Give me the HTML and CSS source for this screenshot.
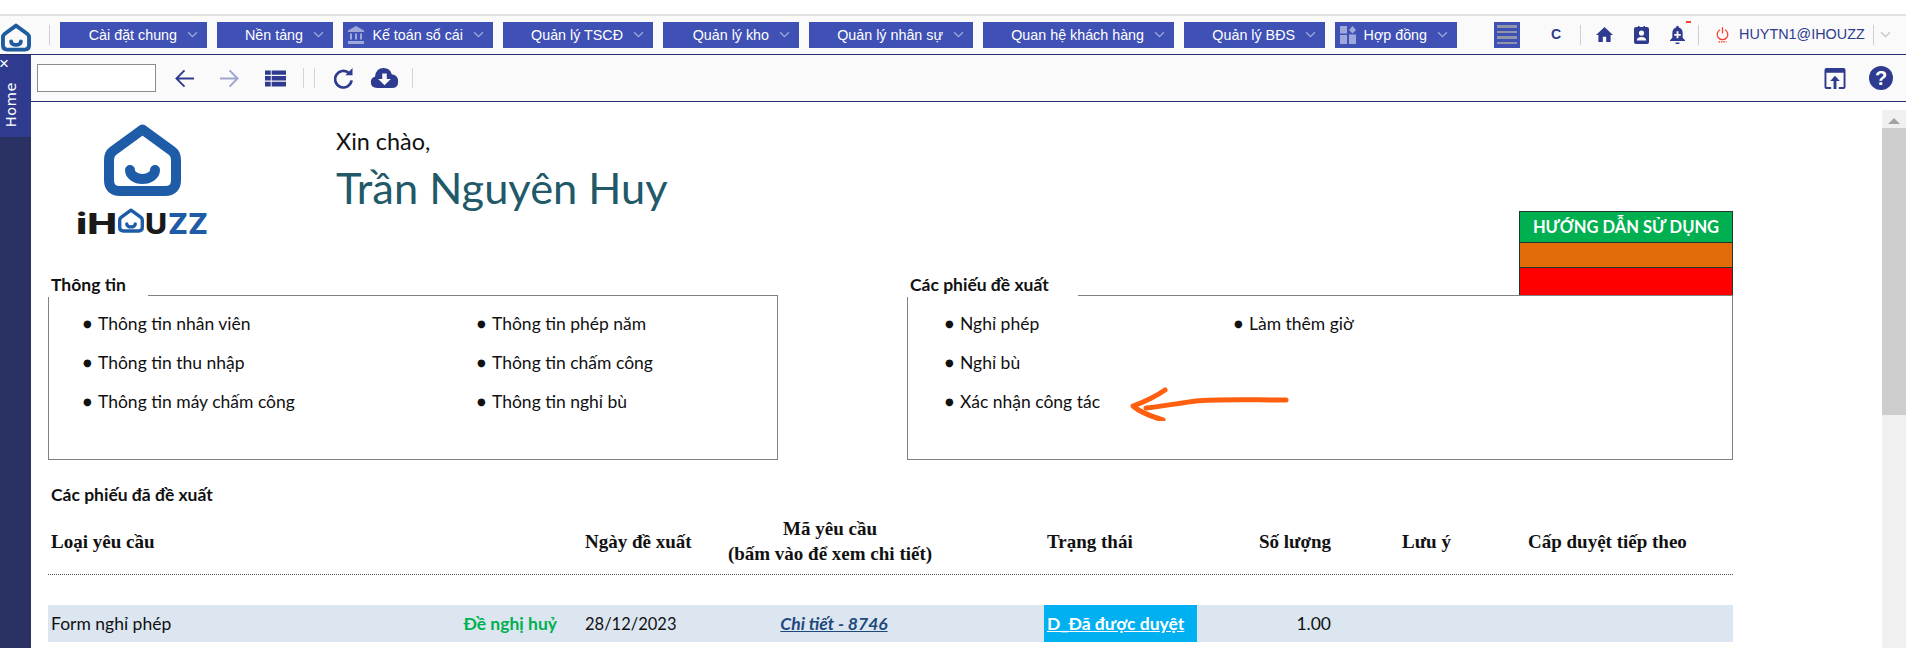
FILE: index.html
```html
<!DOCTYPE html>
<html lang="vi">
<head>
<meta charset="utf-8">
<title>iHOUZZ</title>
<link rel="stylesheet" href="styles.css">
</head>
<body>
<svg class="defs" width="0" height="0">
  <symbol id="house" viewBox="0 0 77 72">
    <path d="M38.500 5.500 L68 27 Q72 30 72 36 V56 Q72 67 61 67 H16 Q5 67 5 56 V36 Q5 30 9 27 Z" fill="none" stroke="currentColor" stroke-width="10" stroke-linejoin="round"/>
    <path d="M26 46 A12.500 9 0 0 0 51 46" fill="none" stroke="currentColor" stroke-width="10" stroke-linecap="round"/>
  </symbol>
</svg>
<div class="strip"></div>
<header class="nav">
  <svg class="nav-logo"><use href="#house"/></svg>
  <span class="nav-sep"></span>
  <div class="menus">
    <a class="menu m1">Cài đặt chung<svg class="chev" viewBox="0 0 12 8"><path d="M1 1.5l5 5 5-5"/></svg></a>
    <a class="menu m2">Nền tảng<svg class="chev" viewBox="0 0 12 8"><path d="M1 1.5l5 5 5-5"/></svg></a>
    <a class="menu m3"><svg class="menu-ico" viewBox="0 0 16 18"><path d="M8 0L16 4.500V6H0V4.500ZM2 7.500H4V13.500H2ZM7 7.500H9V13.500H7ZM12 7.500H14V13.500H12ZM0 15H16V18H0Z"/></svg>Kế toán sổ cái<svg class="chev" viewBox="0 0 12 8"><path d="M1 1.5l5 5 5-5"/></svg></a>
    <a class="menu m4">Quản lý TSCĐ<svg class="chev" viewBox="0 0 12 8"><path d="M1 1.5l5 5 5-5"/></svg></a>
    <a class="menu m5">Quản lý kho<svg class="chev" viewBox="0 0 12 8"><path d="M1 1.5l5 5 5-5"/></svg></a>
    <a class="menu m6">Quản lý nhân sự<svg class="chev" viewBox="0 0 12 8"><path d="M1 1.5l5 5 5-5"/></svg></a>
    <a class="menu m7">Quan hệ khách hàng<svg class="chev" viewBox="0 0 12 8"><path d="M1 1.5l5 5 5-5"/></svg></a>
    <a class="menu m8">Quản lý BĐS<svg class="chev" viewBox="0 0 12 8"><path d="M1 1.5l5 5 5-5"/></svg></a>
    <a class="menu m9"><svg class="menu-ico" viewBox="0 0 16 18"><path d="M0 0H7V7.500H0ZM12.500 0L16 4 12.500 7.500 9 4ZM9 8.500H16V18H9ZM0 9H7V18H0Z"/></svg>Hợp đồng<svg class="chev" viewBox="0 0 12 8"><path d="M1 1.5l5 5 5-5"/></svg></a>
  </div>
  <a class="burger"><span></span><span></span><span></span><span></span></a>
  <span class="nav-c">C</span>
  <span class="nav-sep sep-a"></span>
  <svg class="nav-ico home" viewBox="0 0 18 16"><path d="M9 0L18 8.500H15.500V16H10.800V10.500H7.200V16H2.500V8.500H0Z"/></svg>
  <svg class="nav-ico badge" viewBox="0 0 15 18"><path fill-rule="evenodd" d="M2 1H4V0H5.500V1H9.500V0H11V1H13Q15 1 15 3V16Q15 18 13 18H2Q0 18 0 16V3Q0 1 2 1ZM7.500 4.500A2.600 2.600 0 1 0 7.500 9.700A2.600 2.600 0 1 0 7.500 4.500ZM2.800 14.500H12.200Q12.200 11 7.500 11Q2.800 11 2.800 14.500Z"/></svg>
  <span class="bell-wrap">
    <svg class="nav-ico bell" viewBox="0 0 16 20"><path fill-rule="evenodd" d="M8 0Q9.500 0 9.500 2Q13.500 3 13.500 8V13L16 15.500V16.500H0V15.500L2.500 13V8Q2.500 3 6.500 2Q6.500 0 8 0ZM7 6V9H4.500V10.800H7V13.500H9V10.800H11.500V9H9V6ZM6 18H10V19.500H6Z"/></svg>
    <span class="bell-dot"></span>
  </span>
  <span class="nav-sep sep-b"></span>
  <svg class="power" viewBox="0 0 16 20"><path d="M5 3.500A6.500 6.500 0 1 0 11 3.500M8 0.500V8" fill="none" stroke="#f44336" stroke-width="1.600"/><path d="M3 18.500H13" stroke="#f44336" stroke-width="1.600" stroke-dasharray="2 1"/></svg>
  <span class="user">HUYTN1@IHOUZZ</span>
  <span class="nav-sep sep-c"></span>
  <svg class="chev user-chev" viewBox="0 0 12 8"><path d="M1 1.500l5 5 5-5"/></svg>
</header>
<div class="main">
  <aside class="side">
    <div class="side-tab">
      <span class="side-x">×</span>
      <span class="side-home">Home</span>
    </div>
  </aside>
  <div class="work">
    <div class="toolbar">
      <input class="search" type="text" aria-label="search">
      <svg class="tool back" viewBox="0 0 20 20"><path d="M20 10H2M10 1.500L1.500 10 10 18.500" fill="none" stroke="currentColor" stroke-width="2"/></svg>
      <svg class="tool fwd" viewBox="0 0 20 20"><path d="M0 10H18M10 1.500L18.500 10 10 18.500" fill="none" stroke="currentColor" stroke-width="2"/></svg>
      <svg class="tool list" viewBox="0 0 22 17"><path d="M0 0H6V4.500H0ZM7 0H22V4.500H7ZM0 6H6V10.500H0ZM7 6H22V10.500H7ZM0 12H6V17H0ZM7 12H22V17H7Z"/></svg>
      <span class="tool-sep s1"></span>
      <span class="tool-sep s2"></span>
      <svg class="tool refresh" viewBox="0 0 20 22"><path d="M16 5.500A8.700 8.700 0 1 0 18.500 13" fill="none" stroke="currentColor" stroke-width="2.800"/><path d="M12 7.500H19.500V0Z"/></svg>
      <svg class="tool cloud" viewBox="0 0 30 22"><path fill-rule="evenodd" d="M7 22Q0 22 0 15.500Q0 10.500 4.500 9.500Q5.500 0 14 0Q21 0 23 7Q30 8 30 15Q30 22 23 22ZM12.500 6V12H8L15 19 22 12H17.500V6Z"/></svg>
      <span class="tool-sep s3"></span>
      <svg class="tool upload" viewBox="0 0 22 22"><path fill-rule="evenodd" d="M2 0H20Q22 0 22 2V20Q22 22 20 22H15V20H20V5H2V20H7V22H2Q0 22 0 20V2Q0 0 2 0ZM11 8L16 13.500H12.500V22H9.500V13.500H6Z"/></svg>
      <svg class="tool help" viewBox="0 0 24 24"><circle cx="12" cy="12" r="12"/><text class="help-q" x="12" y="19" text-anchor="middle">?</text></svg>
    </div>
    <div class="body">
      <main class="sheet">
        <section class="hero">
          <svg class="logo" viewBox="0 0 132 122">
            <use href="#house" class="logo-mark" x="28" y="0" width="77" height="72"/>
            <text class="wm wm-black" x="0" y="110" textLength="41" lengthAdjust="spacingAndGlyphs">iH</text>
            <use href="#house" class="logo-mark" x="42" y="83" width="26" height="27"/>
            <text class="wm wm-black" x="69" y="110" textLength="22" lengthAdjust="spacingAndGlyphs">U</text>
            <text class="wm wm-blue" x="92" y="110" textLength="40" lengthAdjust="spacingAndGlyphs">ZZ</text>
          </svg>
          <div class="greet">
            <div class="hello">Xin chào,</div>
            <div class="name">Trần Nguyên Huy</div>
          </div>
          <div class="guide">
            <div class="g-green">HƯỚNG DẪN SỬ DỤNG</div>
            <div class="g-orange"></div>
            <div class="g-red"></div>
          </div>
        </section>
        <section class="panels">
          <div class="panel panel-a">
            <div class="panel-title pt-a">Thông tin</div>
            <ul class="links links-a">
              <li><b>●</b>Thông tin nhân viên</li>
              <li><b>●</b>Thông tin thu nhập</li>
              <li><b>●</b>Thông tin máy chấm công</li>
              <li><b>●</b>Thông tin phép năm</li>
              <li><b>●</b>Thông tin chấm công</li>
              <li><b>●</b>Thông tin nghỉ bù</li>
            </ul>
          </div>
          <div class="panel panel-b">
            <div class="panel-title pt-b">Các phiếu đề xuất</div>
            <ul class="links links-b">
              <li><b>●</b>Nghỉ phép</li>
              <li><b>●</b>Nghỉ bù</li>
              <li><b>●</b>Xác nhận công tác</li>
              <li><b>●</b>Làm thêm giờ</li>
            </ul>
            <svg class="arrow" viewBox="0 0 160 34"><path d="M156 13C120 13 85 12 66 14C50 16 35 19 16 21" fill="none" stroke="#ff5f0f" stroke-width="5" stroke-linecap="round"/><path d="M35 3C25 10 14 15 3 19C10 25 23 30 33 33" fill="none" stroke="#ff5f0f" stroke-width="5" stroke-linecap="round" stroke-linejoin="round"/></svg>
          </div>
        </section>
        <h2 class="sec-title">Các phiếu đã đề xuất</h2>
        <div class="table">
          <div class="thead">
            <div class="th">Loại yêu cầu</div>
            <div class="th">Ngày đề xuất</div>
            <div class="th th-code">Mã yêu cầu<br>(bấm vào để xem chi tiết)</div>
            <div class="th">Trạng thái</div>
            <div class="th th-qty">Số lượng</div>
            <div class="th th-note">Lưu ý</div>
            <div class="th">Cấp duyệt tiếp theo</div>
          </div>
          <div class="trow">
            <div class="td td-type"><span>Form nghỉ phép</span><a class="cancel">Đề nghị huỷ</a></div>
            <div class="td td-date">28/12/2023</div>
            <div class="td td-code"><a class="detail">Chi tiết - 8746</a></div>
            <div class="td td-status"><a>D_Đã được duyệt</a></div>
            <div class="td td-qty">1.00</div>
            <div class="td"></div>
            <div class="td"></div>
          </div>
        </div>
      </main>
      <div class="scroll">
        <span class="scroll-up"></span>
        <span class="scroll-thumb"></span>
      </div>
    </div>
  </div>
</div>
</body>
</html>
```

FILE: styles.css
```css
* { box-sizing: border-box; }
html, body { margin: 0; height: 100%; }
body {
  width: 1906px;
  height: 648px;
  overflow: hidden;
  background: #fff;
  font-family: "Liberation Sans", Arial, sans-serif;
  display: flex;
  flex-direction: column;
}
.defs { position: absolute; }

.strip { height: 16px; flex: none; border-bottom: 2px solid #e2e2e2; }

.nav {
  height: 39px;
  flex: none;
  display: flex;
  align-items: center;
  background: #fafafa;
  border-bottom: 1px solid #262f6e;
  padding-bottom: 1px;
}
.nav-logo { width: 30px; height: 29px; margin: 5px 0 0 1px; color: #1f5c9f; flex: none; }
.nav-sep { width: 1px; height: 20px; background: #cfcfcf; flex: none; }
.nav > .nav-sep:nth-of-type(1) { margin-left: 18px; }
.menus { display: flex; gap: 10px; margin-left: 10px; }
.menu {
  height: 26px;
  background: #3f51b5;
  color: #fff;
  font-size: 14.300px;
  display: flex;
  align-items: center;
  justify-content: flex-end;
  padding-right: 9px;
}
.m1 { width: 147px; }
.m2 { width: 116px; }
.m3 { width: 150px; }
.m4 { width: 150px; }
.m5 { width: 136px; }
.m6 { width: 164px; }
.m7 { width: 191px; }
.m8 { width: 141px; }
.m9 { width: 122px; }
.menu-ico { width: 16px; height: 18px; fill: #9fa8da; margin-right: 8px; }
.chev { width: 11px; height: 7px; margin-left: 10px; fill: none; stroke: #9fa8da; stroke-width: 1.500; flex: none; }
.burger {
  width: 26px;
  height: 26px;
  background: #3f51b5;
  margin-left: 37px;
  display: flex;
  flex-direction: column;
  justify-content: center;
  gap: 3px;
  padding: 0 3px;
  flex: none;
}
.burger span { height: 2.500px; background: #8f94a8; }
.nav-c { font-size: 14px; font-weight: 700; color: #2e3b8e; margin-left: 31px; width: 10px; padding-bottom: 2px; }
.sep-a { margin-left: 19px; }
.nav-ico { fill: #2e3b8e; flex: none; }
.home { width: 17px; height: 15px; margin-left: 15px; }
.badge { width: 15px; height: 18px; margin-left: 21px; }
.bell-wrap { position: relative; display: flex; margin-left: 21px; }
.bell { width: 15px; height: 20px; }
.bell-dot { position: absolute; top: -4px; right: -6px; width: 5px; height: 2px; background: #f44336; }
.sep-b { margin-left: 13px; }
.power { width: 13px; height: 20px; margin-left: 17px; flex: none; }
.user { font-size: 14.400px; color: #2e3b8e; margin-left: 10px; white-space: nowrap; padding-bottom: 1px; }
.sep-c { margin-left: 8px; }
.user-chev { stroke: #c4c4c4; margin-left: 6px; }

.main { flex: 1; display: flex; min-height: 0; }
.side { width: 31px; flex: none; background: #2a3163; }
.side-tab {
  height: 82px;
  background: #2e3b8e;
  color: #fff;
  display: flex;
  flex-direction: column;
  align-items: flex-start;
}
.side-x { font-size: 17px; line-height: 18px; margin-left: -1px; }
.side-home {
  writing-mode: vertical-rl;
  transform: rotate(180deg);
  letter-spacing: .6px;
  margin: 9px 0 0 3px;
  font-family: "DejaVu Sans", sans-serif;
  font-size: 14.500px;
}

.work { flex: 1; min-width: 0; display: flex; flex-direction: column; }
.toolbar {
  height: 47px;
  flex: none;
  display: flex;
  align-items: center;
  background: #fafafa;
  border-bottom: 1px solid #262f6e;
  color: #2e3b8e;
  padding-left: 6px;
  fill: #2e3b8e;
}
.search { width: 119px; height: 28px; border: 1px solid #8c8c8c; background: #fff; flex: none; padding: 0; }
.tool { flex: none; }
.back { width: 19px; height: 19px; margin-left: 19px; }
.fwd { width: 19px; height: 19px; margin-left: 26px; color: #9ea5cf; }
.list { width: 21px; height: 17px; margin-left: 26px; }
.tool-sep { width: 1px; height: 20px; background: #d4d4d4; flex: none; }
.s1 { margin-left: 17px; }
.s2 { margin-left: 10px; }
.refresh { width: 19px; height: 21px; margin-left: 19px; }
.cloud { width: 29px; height: 20px; margin-left: 17px; }
.s3 { margin-left: 13px; }
.upload { width: 22px; height: 21px; margin-left: auto; margin-right: 23px; }
.help { width: 24px; height: 24px; margin-right: 13px; }
.help-q { fill: #fff; font: 700 20px "Liberation Sans", sans-serif; }

.body { flex: 1; display: flex; min-height: 0; }
.sheet {
  flex: 1;
  min-width: 0;
  overflow: hidden;
  color: #111;
  font-family: Lato, "Open Sans", sans-serif;
  font-size: 17.500px;
}
.hero { height: 193px; display: flex; align-items: flex-start; }
.logo { width: 132px; height: 122px; margin: 22px 0 0 45px; flex: none; }
.logo-mark { color: #1f5ca8; }
.wm { font: 800 28px Inter, sans-serif; }
.wm-black { fill: #1a1a1a; }
.wm-blue { fill: #1f5ca8; }
.greet { margin: 24px 0 0 128px; }
.hello { font-size: 23.400px; line-height: 30px; color: #111; }
.name { font-size: 43.400px; line-height: 52px; color: #215968; margin-top: 5px; }
.guide { width: 214px; margin: auto 149px 0 auto; align-self: flex-end; border: 1px solid #1c3a28; border-bottom: 0; }
.g-green {
  height: 31px;
  background: #00b050;
  color: #fff;
  font-weight: 700;
  font-size: 16.500px;
  line-height: 30px;
  text-align: center;
  white-space: nowrap;
  border-bottom: 1px solid #1c3a28;
}
.g-orange { height: 25px; background: #e26b0a; border-bottom: 1px solid #1c3a28; }
.g-red { height: 27px; background: #f00; }

.panels { display: flex; gap: 129px; padding-left: 17px; }
.panel { position: relative; height: 165px; border: 1px solid #808080; }
.panel-a { width: 730px; }
.panel-b { width: 826px; }
.panel-title {
  position: absolute;
  left: -1px;
  top: -21px;
  height: 22px;
  background: #fff;
  font-weight: 700;
  line-height: 20px;
  padding-left: 3px;
  white-space: nowrap;
}
.pt-a { width: 100px; }
.pt-b { width: 171px; }
.links {
  list-style: none;
  margin: 0;
  padding: 8px 0 0;
  display: grid;
  grid-auto-flow: column;
  grid-template-rows: repeat(3, 39px);
}
.links-a { padding-left: 34px; grid-template-columns: 394px 1fr; }
.links-b { padding-left: 37px; grid-template-columns: 289px 1fr; }
.links li { display: flex; align-items: center; gap: 5px; white-space: nowrap; }
.links b { font: 400 10px "DejaVu Sans", sans-serif; width: 10px; }
.arrow { position: absolute; left: 222px; top: 91px; width: 160px; height: 34px; }

.sec-title { margin: 25px 0 0 20px; font-size: 17.500px; line-height: 20px; font-weight: 700; }
.table { margin: 11px 0 0 17px; width: 1685px; }
.thead, .trow {
  display: grid;
  grid-template-columns: 537px 140px 319px 153px 137px 191px 1fr;
}
.thead { height: 59px; align-items: center; padding-bottom: 10px; border-bottom: 1px dotted #555; }
.th {
  font: 700 19px/25px "Liberation Serif", serif;
  padding-left: 3px;
  white-space: nowrap;
  color: #111;
}
.th:nth-child(2) { padding-left: 0; }
.th-code { width: 210px; padding: 0; text-align: center; }
.th-qty { text-align: right; padding: 0 3px 0 0; }
.th-note { padding-left: 68px; }
.trow { height: 37px; margin-top: 30px; background: #dce6f1; align-items: center; }
.td { padding-left: 3px; white-space: nowrap; }
.td-date { padding-left: 0; font-size: 16.500px; }
.td-type { display: flex; justify-content: space-between; padding-right: 28px; }
.cancel { color: #00b050; font-weight: 700; }
.td-code { width: 210px; padding: 0 0 0 8px; text-align: center; }
.detail { color: #1f497d; font-weight: 700; font-style: italic; text-decoration: underline; }
.td-status { background: #00b0f0; height: 37px; line-height: 37px; color: #fff; font-weight: 700; text-decoration: underline; }
.td-qty { text-align: right; padding: 0 3px 0 0; }

.scroll {
  width: 24px;
  flex: none;
  margin-top: 8px;
  background: #f0f0f0;
  display: flex;
  flex-direction: column;
  align-items: center;
}
.scroll-up {
  margin-top: 8px;
  border: 6px solid transparent;
  border-top: 0;
  border-bottom: 6px solid #a3a3a3;
}
.scroll-thumb { width: 100%; height: 287px; margin-top: 4px; background: #cdcdcd; }
```
